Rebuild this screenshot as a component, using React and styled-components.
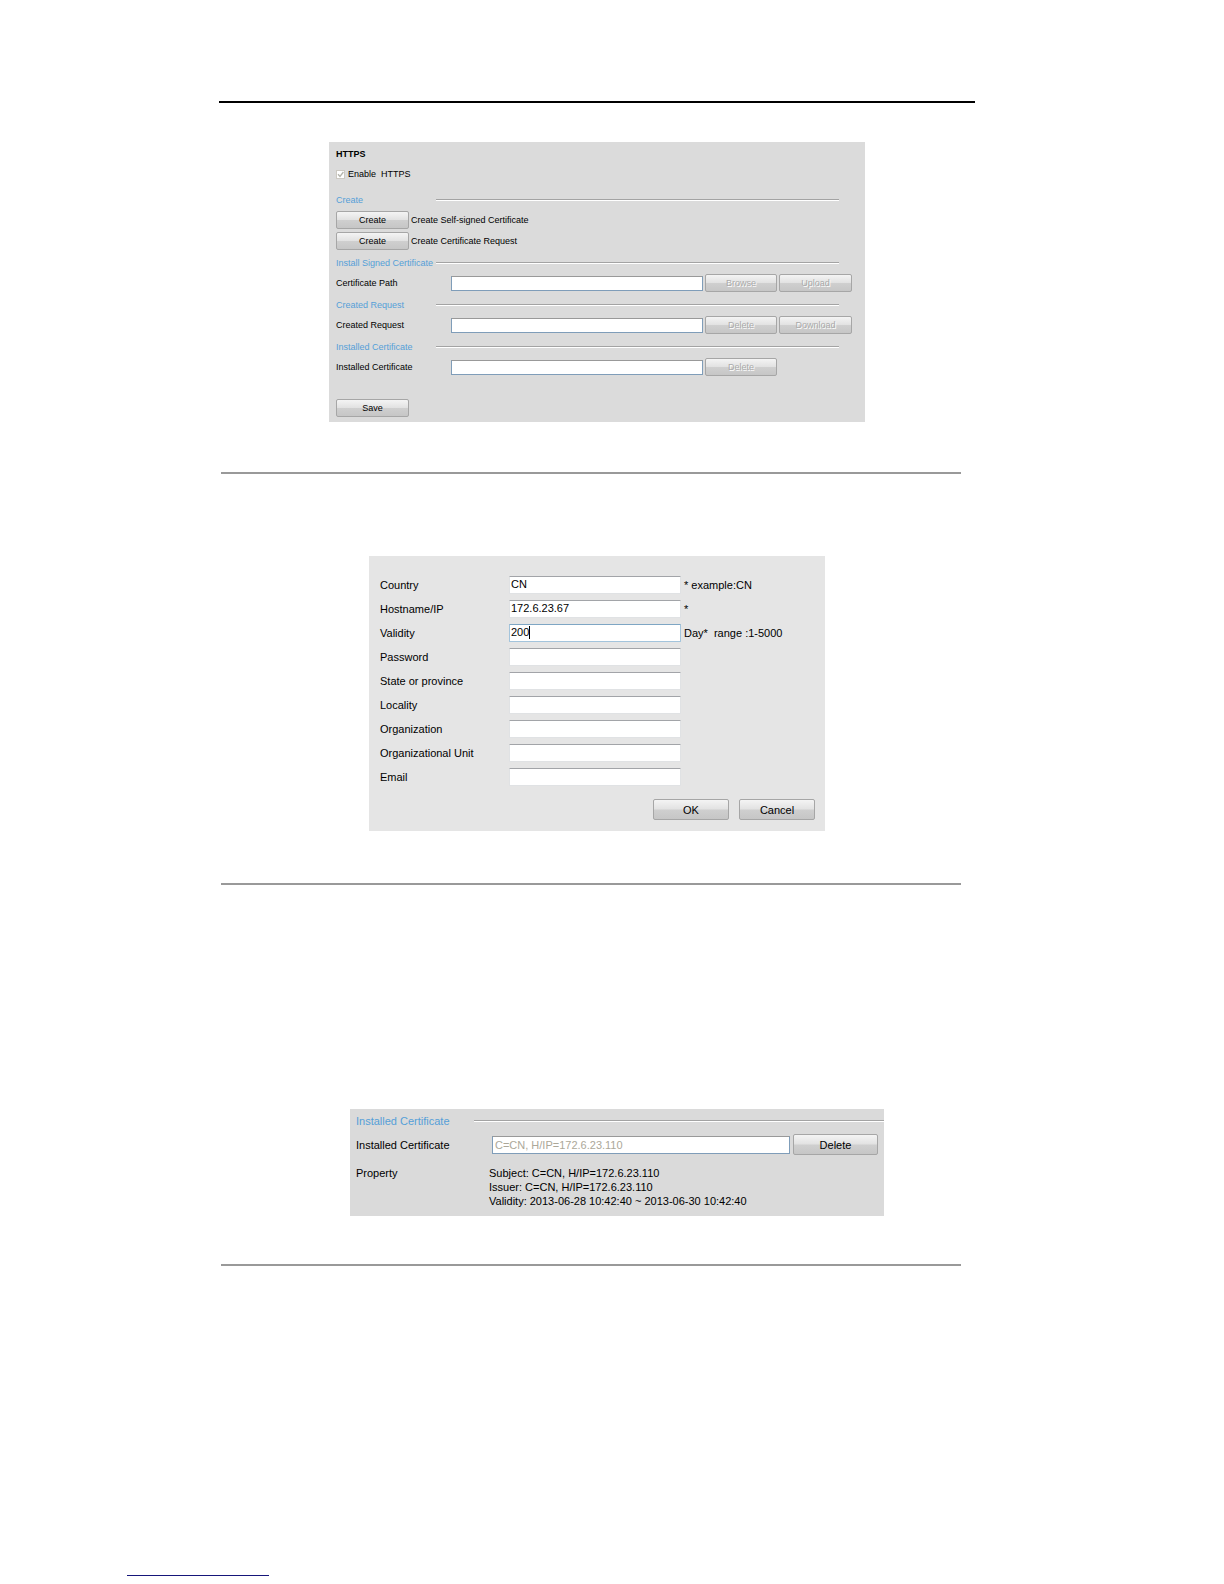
import React from "react";
import styled, {createGlobalStyle} from "styled-components";

const storedItems = [
    {id: "path", title: "Install Signed Certificate", label: "Certificate Path", actions: ["Browse", "Upload"]},
    {id: "request", title: "Created Request", label: "Created Request", actions: ["Delete", "Download"]},
    {id: "installed", title: "Installed Certificate", label: "Installed Certificate", actions: ["Delete"]},
];

const requestFields = [
    {id: "country", label: "Country", value: "CN", hint: "* example:CN"},
    {id: "hostname", label: "Hostname/IP", value: "172.6.23.67", hint: "*"},
    {id: "validity", label: "Validity", value: "200", hint: "Day*\u00a0 range :1-5000", active: true},
    {id: "password", label: "Password"},
    {id: "state", label: "State or province"},
    {id: "locality", label: "Locality"},
    {id: "organization", label: "Organization"},
    {id: "unit", label: "Organizational Unit"},
    {id: "email", label: "Email"},
];

const HttpsPanel = () => (
    <SettingsPanel>
        <PanelTitle>HTTPS</PanelTitle>
        <CheckRow>
            <CheckBoxWrap>
                <CheckBox type="checkbox" id="enable-https" defaultChecked disabled />
                <CheckMark viewBox="0 0 9 9" aria-hidden="true">
                    <path d="M2 4.2L4 6.5L7.4 2" fill="none" stroke="#b4b4ac" strokeWidth="1.3" />
                </CheckMark>
            </CheckBoxWrap>
            <label htmlFor="enable-https">Enable{"\u00a0"} HTTPS</label>
        </CheckRow>
        <SectionHead>
            <SectionTitle>Create</SectionTitle>
            <SectionLine />
        </SectionHead>
        <CreateList>
            <CreateRow>
                <Button type="button">Create</Button>
                <span>Create Self-signed Certificate</span>
            </CreateRow>
            <CreateRow>
                <Button type="button">Create</Button>
                <span>Create Certificate Request</span>
            </CreateRow>
        </CreateList>
        {storedItems.map(item => (
            <React.Fragment key={item.id}>
                <SectionHead>
                    <SectionTitle>{item.title}</SectionTitle>
                    <SectionLine />
                </SectionHead>
                <StoredRow>
                    <label htmlFor={item.id}>{item.label}</label>
                    <StoredInput type="text" id={item.id} />
                    {item.actions.map(action => (
                        <Button key={action} type="button" disabled>{action}</Button>
                    ))}
                </StoredRow>
            </React.Fragment>
        ))}
        <SaveRow>
            <Button type="button">Save</Button>
        </SaveRow>
    </SettingsPanel>
);

const RequestPanel = () => (
    <FormPanel>
        <FieldList>
            {requestFields.map(field => (
                <FieldRow key={field.id}>
                    <label htmlFor={field.id}>{field.label}</label>
                    <FieldBox>
                        <FieldInput
                            id={field.id}
                            type={field.id === "password" ? "password" : "text"}
                            defaultValue={field.value}
                            $active={field.active}
                        />
                        {field.active && <Caret />}
                    </FieldBox>
                    <span>{field.hint}</span>
                </FieldRow>
            ))}
        </FieldList>
        <FormActions>
            <Button type="button" $large>OK</Button>
            <Button type="button" $large>Cancel</Button>
        </FormActions>
    </FormPanel>
);

const CertificatePanel = () => (
    <DetailPanel>
        <DetailHead>
            <SectionTitle>Installed Certificate</SectionTitle>
            <SectionLine />
        </DetailHead>
        <DetailRow>
            <label htmlFor="certificate">Installed Certificate</label>
            <DetailInput type="text" id="certificate" defaultValue="C=CN, H/IP=172.6.23.110" disabled />
            <Button type="button" $large>Delete</Button>
        </DetailRow>
        <PropertyList>
            <dt>Property</dt>
            <dd>Subject: C=CN, H/IP=172.6.23.110</dd>
            <dd>Issuer: C=CN, H/IP=172.6.23.110</dd>
            <dd>Validity: 2013-06-28 10:42:40 ~ 2013-06-30 10:42:40</dd>
        </PropertyList>
    </DetailPanel>
);

const App = () => (
    <>
        <GlobalStyle />
        <Page>
            <HeaderRule />
            <Figure $top={39} $bottom={50}>
                <HttpsPanel />
            </Figure>
            <Divider />
            <Figure $top={82} $bottom={52}>
                <RequestPanel />
            </Figure>
            <Divider />
            <Figure $top={224} $bottom={48} $indent={40}>
                <CertificatePanel />
            </Figure>
            <Divider />
        </Page>
        <Footer>
            <FooterRule />
        </Footer>
    </>
);

const GlobalStyle = createGlobalStyle`
    * {
        box-sizing: border-box;
    }
    body {
        margin: 0;
        background: #fff;
        color: #000;
        font-family: "Liberation Sans", Arial, sans-serif;
    }
    button, input {
        font: inherit;
        color: inherit;
    }
`;

const Page = styled.main`
    padding: 101px 249px 0 219px;
    @media screen and (max-width: 1000px) {
        padding: 40px 24px 0;
    }
`;

const HeaderRule = styled.hr`
    height: 2px;
    margin: 0;
    border: 0;
    background: #000;
`;

const Divider = styled(HeaderRule)`
    margin: 0 14px 0 2px;
    background: #999;
`;

const Figure = styled.section`
    display: flex;
    justify-content: center;
    padding: ${props => props.$top}px 0 ${props => props.$bottom}px ${props => props.$indent || 0}px;
`;

const SettingsPanel = styled.form`
    width: 100%;
    max-width: 536px;
    padding: 6px 13px 5px 7px;
    background: #dbdbdb;
    font-size: 9px;
    line-height: 12px;
`;

const PanelTitle = styled.h2`
    margin: 0;
    font-size: 9px;
    line-height: 12px;
`;

const CheckRow = styled.div`
    display: flex;
    align-items: center;
    gap: 3px;
    height: 14px;
    margin: 7px 0 13px;
`;

const CheckBoxWrap = styled.span`
    display: grid;
    > * {
        grid-area: 1 / 1;
    }
`;

const CheckBox = styled.input`
    appearance: none;
    width: 9px;
    height: 9px;
    margin: 0;
    background: #fff;
    border: 1px solid #ccc9c2;
`;

const CheckMark = styled.svg`
    width: 9px;
    height: 9px;
    pointer-events: none;
`;

const SectionHead = styled.div`
    display: grid;
    grid-template-columns: 100px 1fr;
    align-items: center;
    margin: 7px 13px 5px 0;
`;

const SectionTitle = styled.h3`
    margin: 0;
    color: #559fd8;
    font-size: inherit;
    font-weight: normal;
    white-space: nowrap;
`;

const SectionLine = styled.span`
    height: 2px;
    border-top: 1px solid #a3a3a3;
    border-bottom: 1px solid #fff;
`;

const Button = styled.button`
    flex: none;
    width: ${props => props.$large ? 76 : 73}px;
    height: ${props => props.$large ? 21 : 18}px;
    padding: 0;
    border: 1px solid #a6a6a6;
    border-radius: 2px;
    background: linear-gradient(#f4f4f4, #e2e2e2 48%, #cfcfcf 52%, #c6c6c6);
    &:disabled {
        color: #aaa;
        text-shadow: 1px 1px 0 #fff;
    }
`;

const CreateList = styled.div`
    display: grid;
    gap: 3px;
`;

const CreateRow = styled.div`
    display: flex;
    align-items: center;
    gap: 2px;
`;

const StoredRow = styled.div`
    display: grid;
    grid-template-columns: 115px 1fr 72px 73px;
    column-gap: 2px;
    align-items: center;
    > label {
        margin-right: -2px;
    }
    > button {
        width: 100%;
    }
`;

const StoredInput = styled.input`
    min-width: 0;
    height: 15px;
    padding: 0 2px;
    margin-left: -2px;
    background: #fff;
    border: 1px solid #7f9db9;
    border-top-color: #999;
    border-radius: 0;
`;

const SaveRow = styled.div`
    display: flex;
    margin-top: 23px;
`;

const FormPanel = styled.form`
    width: 100%;
    max-width: 456px;
    padding: 20px 10px 11px 11px;
    background: #e5e5e5;
    font-size: 11px;
    line-height: 18px;
`;

const FieldList = styled.div`
    display: grid;
    gap: 6px;
`;

const FieldRow = styled.div`
    display: grid;
    grid-template-columns: 129px 172px 1fr;
    align-items: center;
    > span {
        padding-left: 3px;
    }
`;

const FieldBox = styled.div`
    position: relative;
    display: flex;
`;

const FieldInput = styled.input`
    width: 100%;
    height: 18px;
    padding: 0 1px 2px;
    background: #fff;
    border: 1px solid ${props => props.$active ? "#a3c4dc" : "#e0e2e4"};
    border-top-color: ${props => props.$active ? "#7ea6c4" : "#a2a4a8"};
    border-radius: 1px;
`;

// text cursor of the field that is being edited
const Caret = styled.i`
    position: absolute;
    top: 2px;
    left: 20px;
    width: 1px;
    height: 13px;
    background: #000;
`;

const FormActions = styled.div`
    display: flex;
    justify-content: flex-end;
    gap: 10px;
    margin-top: 13px;
`;

const DetailPanel = styled.div`
    width: 100%;
    max-width: 534px;
    padding: 5px 0 8px 6px;
    background: #dadada;
    font-size: 11px;
    line-height: 14px;
`;

const DetailHead = styled(SectionHead)`
    grid-template-columns: 118px 1fr;
    margin: 0 0 6px;
`;

const DetailRow = styled.div`
    display: grid;
    grid-template-columns: 136px 1fr 85px;
    align-items: center;
    margin-right: 6px;
    > button {
        width: 100%;
    }
`;

const DetailInput = styled(StoredInput)`
    height: 18px;
    margin: 0 3px 0 0;
    color: #aca899;
`;

const PropertyList = styled.dl`
    display: grid;
    grid-template-columns: 133px 1fr;
    margin: 11px 0 0;
    > dd {
        grid-column: 2;
        margin: 0;
    }
`;

const Footer = styled.footer`
    padding: 309px 127px 8px;
`;

const FooterRule = styled.hr`
    width: 142px;
    height: 1px;
    margin: 0;
    border: 0;
    background: #16167a;
`;

export default App;
